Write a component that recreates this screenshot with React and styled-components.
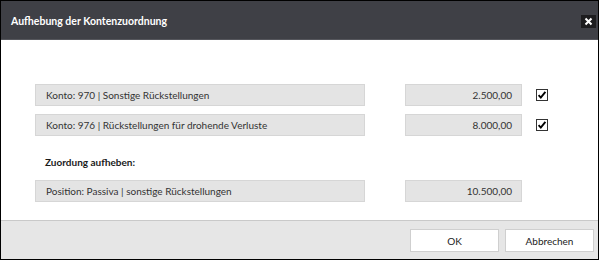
import React from "react";
import styled, { createGlobalStyle } from "styled-components";

const Global = createGlobalStyle`
  html, body { margin: 0; padding: 0; background: #ffffff; }
  body { font-family: Lato, "Open Sans", sans-serif; }
  * { box-sizing: border-box; }
`;

const Dialog = styled.div`
  width: 599px;
  height: 260px;
  border: 1px solid #000000;
  display: flex;
  flex-direction: column;
  background: #ffffff;
`;

const Header = styled.div`
  height: 39px;
  background: #3f4046;
  border-bottom: 1px solid #55565c;
  display: flex;
  align-items: center;
  justify-content: space-between;
  padding: 0 2px 0 10px;
`;

const Title = styled.h1`
  margin: 0;
  font-size: 10.5px;
  font-weight: 700;
  color: #ffffff;
  padding-top: 1px;
`;

const CloseButton = styled.button`
  width: 15px;
  height: 13px;
  margin-top: 2px;
  border: none;
  padding: 0;
  background: #1d1d1f;
  display: flex;
  align-items: center;
  justify-content: center;
  cursor: pointer;
`;

const Body = styled.div`
  flex: 1;
  padding: 44px 0 0 34px;
  display: flex;
  flex-direction: column;
`;

const Row = styled.div`
  display: grid;
  grid-template-columns: 330px 117px 12px;
  column-gap: 40px;
  align-items: center;
  height: 22px;
  margin-bottom: 8px;
  & > :nth-child(3) { margin-left: -26px; }
`;

const Field = styled.div`
  height: 22px;
  background: #e4e4e4;
  border: 1px solid #d6d6d6;
  display: flex;
  align-items: center;
  justify-content: ${(p) => (p.$right ? "flex-end" : "flex-start")};
  padding: ${(p) => (p.$right ? "0 9px 0 0" : "0 0 0 10px")};
  font-size: 10px;
  color: #333333;
  white-space: nowrap;
`;

const SectionLabel = styled.div`
  font-size: 10px;
  font-weight: 700;
  color: #1a1a1a;
  padding-left: 10px;
  height: 24px;
  margin-top: 6px;
  margin-bottom: 6px;
  display: flex;
  align-items: center;
`;

const Footer = styled.div`
  height: 39px;
  background: #e6e6e6;
  border-top: 1px solid #c9c9c9;
  display: flex;
  justify-content: flex-end;
  align-items: center;
  gap: 6px;
  padding: 0 4px 0 0;
`;

const Button = styled.button`
  width: 89px;
  height: 23px;
  background: #ffffff;
  border: 1px solid #cfcfcf;
  font-family: Lato, "Open Sans", sans-serif;
  font-size: 10px;
  color: #222222;
  padding: 0;
  margin-top: 1px;
  cursor: pointer;
`;

const Check = () => (
  <svg width="12" height="12" viewBox="0 0 12 12">
    <rect x="0.5" y="0.5" width="11" height="11" fill="#ffffff" stroke="#333333" />
    <path d="M2.6 6.2 L4.8 8.6 L9.4 2.8" fill="none" stroke="#000000" strokeWidth="1.9" />
  </svg>
);

const CloseIcon = () => (
  <svg width="9" height="9" viewBox="0 0 9 9">
    <path d="M1.5 1.5 L7.5 7.5 M7.5 1.5 L1.5 7.5" stroke="#ffffff" strokeWidth="2" />
  </svg>
);

const rows = [
  { label: "Konto: 970 | Sonstige Rückstellungen", value: "2.500,00" },
  { label: "Konto: 976 | Rückstellungen für drohende Verluste", value: "8.000,00" },
];

export default function App() {
  return (
    <>
      <Global />
      <Dialog>
        <Header>
          <Title>Aufhebung der Kontenzuordnung</Title>
          <CloseButton aria-label="Schließen">
            <CloseIcon />
          </CloseButton>
        </Header>
        <Body>
          {rows.map((r) => (
            <Row key={r.label}>
              <Field>{r.label}</Field>
              <Field $right>{r.value}</Field>
              <Check />
            </Row>
          ))}
          <SectionLabel>Zuordung aufheben:</SectionLabel>
          <Row>
            <Field>Position: Passiva | sonstige Rückstellungen</Field>
            <Field $right>10.500,00</Field>
          </Row>
        </Body>
        <Footer>
          <Button>OK</Button>
          <Button>Abbrechen</Button>
        </Footer>
      </Dialog>
    </>
  );
}
